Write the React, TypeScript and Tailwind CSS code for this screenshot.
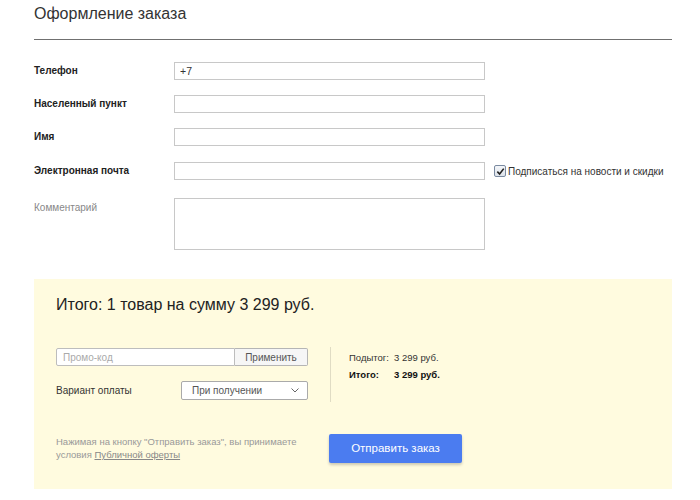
import React from 'react'

const fields = [
  { label: 'Телефон', value: '+7' },
  { label: 'Населенный пункт', value: '' },
  { label: 'Имя', value: '' },
  { label: 'Электронная почта', value: '' },
]

export default function App() {
  return (
    <div className="min-h-[500px] w-[700px] bg-white font-['Liberation_Sans',Arial,sans-serif] text-[#333]">
      <div className="ml-[34px] w-[638px]">
        {/* Заголовок */}
        <div className="h-[40px] border-b border-[#707070] pt-[4px]">
          <h1 className="text-[16px] leading-[20px] text-[#333]">Оформление заказа</h1>
        </div>

        {/* Поля формы */}
        <div className="mt-[22px] flex flex-col">
          {fields.map((f, i) => (
            <div key={f.label} className={`flex items-center ${i === 0 ? '' : i === 3 ? 'mt-[16px]' : 'mt-[15px]'}`}>
              <label className="w-[140px] shrink-0 text-[10px] font-bold leading-[18px] text-[#222]">{f.label}</label>
              <input
                defaultValue={f.value}
                className="h-[18px] w-[311px] shrink-0 border border-[#c8c8c8] bg-white px-[5px] text-[10.5px] text-[#333] outline-none"
              />
              {i === 3 && (
                <label className="ml-[9px] flex items-center gap-[2px] whitespace-nowrap text-[10px] text-[#333]">
                  <span className="flex h-[12px] w-[12px] items-center justify-center rounded-[2px] border border-[#7a8aa0] bg-gradient-to-b from-[#f4f6f9] to-[#dde3ea]">
                    <svg width="9" height="9" viewBox="0 0 10 10">
                      <path d="M1.5 5.2 L4 7.8 L8.6 1.8" fill="none" stroke="#222" strokeWidth="1.8" />
                    </svg>
                  </span>
                  Подписаться на новости и скидки
                </label>
              )}
            </div>
          ))}
          <div className="mt-[18px] flex items-start">
            <label className="w-[140px] shrink-0 pt-[3px] text-[10px] leading-[14px] text-[#888]">Комментарий</label>
            <textarea className="h-[52px] w-[311px] shrink-0 resize-none border border-[#c8c8c8] bg-white px-[5px] text-[11px] outline-none" />
          </div>
        </div>

        {/* Итог */}
        <div className="mt-[29px] h-[210px] bg-[#fffbdf] pl-[22px] pt-[16px]">
          <h2 className="text-[16px] leading-[20px] text-[#222]">Итого: 1 товар на сумму 3 299 руб.</h2>

          <div className="mt-[32px] flex h-[55px]">
            <div className="flex w-[252px] flex-col pt-[1px]">
              <div className="flex h-[18px]">
                <input
                  placeholder="Промо-код"
                  className="h-[18px] w-[179px] rounded-l-[2px] border border-[#bdbdbd] bg-white px-[6px] text-[10px] text-[#333] outline-none placeholder:text-[#aaa]"
                />
                <button className="h-[18px] w-[73px] rounded-r-[2px] border border-l-0 border-[#b5b5b5] bg-[#f6f6f6] text-[10px] text-[#555]">
                  Применить
                </button>
              </div>
              <div className="mt-[15px] flex items-center">
                <span className="w-[125px] text-[10px] text-[#333]">Вариант оплаты</span>
                <div className="flex h-[19px] w-[127px] items-center justify-between rounded-[2px] border border-[#aaa] bg-white pl-[10px] pr-[8px] text-[10px] text-[#555]">
                  При получении
                  <svg width="8" height="5" viewBox="0 0 8 5">
                    <path d="M0.5 0.5 L4 4 L7.5 0.5" fill="none" stroke="#666" strokeWidth="1" />
                  </svg>
                </div>
              </div>
            </div>
            <div className="ml-[22px] w-px bg-[#e0dcc4]" />
            <div className="flex flex-col pl-[18px] pt-[2px] text-[9.5px] leading-[17px]">
              <div className="flex text-[#333]">
                <span className="w-[45px]">Подытог:</span>
                <span>3 299 руб.</span>
              </div>
              <div className="flex font-bold text-[#111]">
                <span className="w-[45px]">Итого:</span>
                <span>3 299 руб.</span>
              </div>
            </div>
          </div>

          <div className="mt-[32px] flex items-start">
            <p className="w-[273px] pt-[1px] text-[9.5px] leading-[13px] text-[#999]">
              Нажимая на кнопку "Отправить заказ", вы принимаете условия{' '}
              <a className="text-[#888] underline">Публичной оферты</a>
            </p>
            <button className="h-[29px] w-[133px] rounded-[2px] bg-[#4b7cf0] text-[11.5px] text-white shadow-[0_2px_3px_rgba(0,0,0,0.2)]">
              Отправить заказ
            </button>
          </div>
        </div>
      </div>
    </div>
  )
}
